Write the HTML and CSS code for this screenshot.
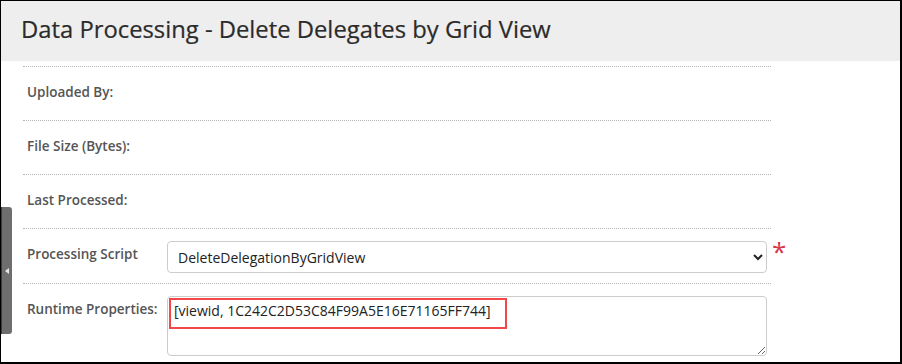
FILE: index.html
```html
<!DOCTYPE html>
<html>
<head>
  <title>Data Processing - Delete Delegates by Grid View</title>
  <link rel="stylesheet" href="styles.css">
</head>
<body>
  <div class="frame">
    <div class="page-header">
      <h1>Data Processing - Delete Delegates by Grid View</h1>
    </div>

    <!-- Job details -->
    <div class="form">
      <div class="row">
        <label class="field-label">Uploaded By:</label>
        <div class="field-value"></div>
      </div>
      <div class="row">
        <label class="field-label">File Size (Bytes):</label>
        <div class="field-value"></div>
      </div>
      <div class="row">
        <label class="field-label">Last Processed:</label>
        <div class="field-value"></div>
      </div>
      <div class="row">
        <label class="field-label">Processing Script</label>
        <div class="field-value">
          <select class="script-select">
            <option>DeleteDelegationByGridView</option>
          </select>
          <span class="required">*</span>
        </div>
      </div>
      <div class="row">
        <label class="field-label">Runtime Properties:</label>
        <div class="field-value">
          <div class="textarea-wrap">
            <textarea class="props">[viewid, 1C242C2D53C84F99A5E16E71165FF744]</textarea>
            <span class="highlight"></span>
          </div>
        </div>
      </div>
    </div>

    <!-- Collapsed side panel handle -->
    <div class="side-tab"><span class="side-arrow"></span></div>
  </div>
</body>
</html>
```

FILE: styles.css
```css
html, body { margin: 0; padding: 0; background: #fff; }
body { font-family: "Open Sans", Arial, sans-serif; }

.frame {
  position: relative;
  width: 902px;
  height: 364px;
  box-sizing: border-box;
  border-top: 1px solid #000;
  border-left: 1px solid #000;
  border-right: 2px solid #000;
  border-bottom: 2px solid #000;
  overflow: hidden;
}

.page-header {
  background: #eeeeee;
  height: 60px;
  padding-left: 20px;
  display: flex;
  align-items: center;
}
.page-header h1 {
  margin: 0;
  font-size: 23.8px;
  font-weight: 400;
  color: #2b2b2b;
  line-height: 1;
  padding-bottom: 2px;
  -webkit-text-stroke: 0.2px #2b2b2b;
}

.form {
  margin: 5px 0 0 22px;
  width: 748px;
}
.row {
  display: flex;
  border-top: 1px dotted #b3b3b3;
  padding: 12px 0 10px;
  min-height: 31px;
}
.field-label {
  width: 140px;
  padding-left: 4px;
  flex: none;
  font-size: 13.5px;
  font-weight: 600;
  color: #555;
  line-height: 27px;
}
.field-value {
  display: flex;
  align-items: flex-start;
}

.script-select {
  width: 600px;
  height: 32px;
  border: 1px solid #ccc;
  border-radius: 4px;
  background: #fff;
  padding: 0 6px;
  font-family: "Open Sans", Arial, sans-serif;
  font-size: 14px;
  color: #222;
}
.required {
  color: #d9364a;
  font-size: 26px;
  line-height: 20px;
  margin-left: 5px;
  margin-right: -20px;
}

.textarea-wrap { position: relative; }
.props {
  display: block;
  width: 600px;
  height: 60px;
  box-sizing: border-box;
  border: 1px solid #ccc;
  border-radius: 4px;
  padding: 4px 6px;
  font-family: "Open Sans", Arial, sans-serif;
  font-size: 14px;
  line-height: 20px;
  color: #222;
}
.highlight {
  position: absolute;
  left: 2px;
  top: 2px;
  width: 338px;
  height: 31px;
  box-sizing: border-box;
  border: 2px solid #f0474a;
}

.side-tab {
  position: absolute;
  left: -1px;
  top: 206px;
  width: 12px;
  height: 127px;
  background: #6e6e6e;
  border-left: 2px solid #3a3a3a;
  border-radius: 0 3px 3px 0;
  box-sizing: border-box;
}
.side-arrow {
  position: absolute;
  left: 3px;
  top: 61px;
  width: 0;
  height: 0;
  border-top: 3px solid transparent;
  border-bottom: 3px solid transparent;
  border-right: 4px solid #e6e6e6;
}
```
